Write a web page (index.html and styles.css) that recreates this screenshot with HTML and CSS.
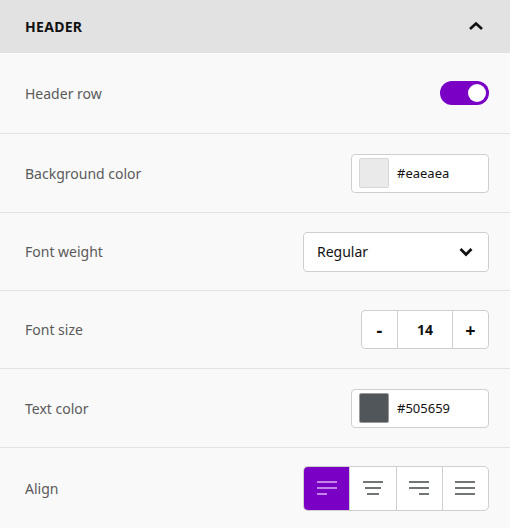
FILE: index.html
```html
<!DOCTYPE html>
<html lang="en">
<head>
    <meta charset="UTF-8">
    <meta name="viewport" content="width=device-width, initial-scale=1.0">
    <title>Header settings</title>
    <link rel="stylesheet" href="styles.css">
</head>
<body>
    <div class="panel">
        <div class="panel-header">
            <span class="panel-title">HEADER</span>
            <svg class="chevron" width="16" height="10" viewBox="0 0 16 10">
                <path d="M2 8 L8 2.5 L14 8" fill="none" stroke="#111" stroke-width="2.6"/>
            </svg>
        </div>

        <div class="row first">
            <span class="label">Header row</span>
            <div class="toggle on"><div class="knob"></div></div>
        </div>

        <div class="row">
            <span class="label">Background color</span>
            <div class="color-input">
                <span class="swatch light"></span>
                <span class="value">#eaeaea</span>
            </div>
        </div>

        <div class="row short">
            <span class="label">Font weight</span>
            <div class="select">
                <span>Regular</span>
                <svg width="14" height="10" viewBox="0 0 14 10">
                    <path d="M1.5 2 L7 7.5 L12.5 2" fill="none" stroke="#111" stroke-width="2.8"/>
                </svg>
            </div>
        </div>

        <div class="row short">
            <span class="label">Font size</span>
            <div class="stepper">
                <button class="step">-</button>
                <span class="step-value">14</span>
                <button class="step">+</button>
            </div>
        </div>

        <div class="row">
            <span class="label">Text color</span>
            <div class="color-input">
                <span class="swatch dark"></span>
                <span class="value">#505659</span>
            </div>
        </div>

        <div class="row last">
            <span class="label">Align</span>
            <div class="align-group">
                <button class="align active">
                    <svg width="20" height="16" viewBox="0 0 20 16">
                        <path d="M0 2h20M0 8h20M0 14h10" stroke="#dcb0f2" stroke-width="1.6"/>
                    </svg>
                </button>
                <button class="align">
                    <svg width="20" height="16" viewBox="0 0 20 16">
                        <path d="M0 2h20M2 8h16M4 14h12" stroke="#44484b" stroke-width="1.6"/>
                    </svg>
                </button>
                <button class="align">
                    <svg width="20" height="16" viewBox="0 0 20 16">
                        <path d="M0 2h20M0 8h20M10 14h10" stroke="#44484b" stroke-width="1.6"/>
                    </svg>
                </button>
                <button class="align">
                    <svg width="20" height="16" viewBox="0 0 20 16">
                        <path d="M0 2h20M0 8h20M0 14h20" stroke="#44484b" stroke-width="1.6"/>
                    </svg>
                </button>
            </div>
        </div>
    </div>
</body>
</html>
```

FILE: styles.css
```css
* {
    margin: 0;
    padding: 0;
    box-sizing: border-box;
}

body {
    font-family: "Noto Sans", "Open Sans", sans-serif;
    background: #f9f9f9;
    color: #111;
    font-size: 14px;
}

.panel {
    width: 510px;
}

.panel-header {
    height: 53px;
    background: #e2e2e2;
    display: flex;
    align-items: center;
    justify-content: space-between;
    padding: 0 26px 0 25px;
}

.panel-title {
    font-size: 14px;
    font-weight: 700;
    letter-spacing: 0.3px;
}

.chevron {
    margin-top: -2px;
}

.row {
    height: 79px;
    display: flex;
    align-items: center;
    justify-content: space-between;
    padding: 0 21px 0 25px;
    border-bottom: 1px solid #e3e3e3;
}

.row.first {
    height: 81px;
}

.row.short {
    height: 78px;
}

.row.last {
    border-bottom: none;
    height: 80px;
}

.label {
    color: #5a5a5a;
    font-size: 14px;
}

.toggle {
    width: 49px;
    height: 24px;
    border-radius: 12px;
    background: #7a00c6;
    position: relative;
}

.toggle .knob {
    position: absolute;
    top: 3px;
    right: 3px;
    width: 18px;
    height: 18px;
    border-radius: 50%;
    background: #fff;
}

.color-input {
    width: 138px;
    height: 39px;
    background: #fff;
    border: 1px solid #cfcfcf;
    border-radius: 4px;
    display: flex;
    align-items: center;
    padding: 0 7px;
    gap: 8px;
}

.swatch {
    width: 30px;
    height: 30px;
    border: 1px solid #d6d6d6;
    border-radius: 2px;
}

.swatch.light {
    background: #eaeaea;
}

.swatch.dark {
    background: #505659;
    border-color: #9a9a9a;
}

.value {
    font-size: 13px;
    color: #111;
}

.select {
    width: 186px;
    height: 40px;
    background: #fff;
    border: 1px solid #cfcfcf;
    border-radius: 4px;
    display: flex;
    align-items: center;
    justify-content: space-between;
    padding: 0 15px 0 13px;
}

.stepper {
    width: 128px;
    height: 39px;
    display: flex;
    background: #fff;
    border: 1px solid #cfcfcf;
    border-radius: 4px;
}

.step {
    width: 35px;
    border: none;
    background: transparent;
    font-family: inherit;
    font-size: 18px;
    font-weight: 700;
    color: #111;
}

.step-value {
    flex: 1;
    display: flex;
    align-items: center;
    justify-content: center;
    border-left: 1px solid #cfcfcf;
    border-right: 1px solid #cfcfcf;
    font-weight: 700;
}

.align-group {
    width: 186px;
    height: 45px;
    display: flex;
    background: #fff;
    border: 1px solid #cfcfcf;
    border-radius: 5px;
    overflow: hidden;
}

.align {
    flex: 1;
    border: none;
    border-left: 1px solid #cfcfcf;
    background: transparent;
    display: flex;
    align-items: center;
    justify-content: center;
}

.align:first-child {
    border-left: none;
}

.align.active {
    background: #7a00c6;
}
```
